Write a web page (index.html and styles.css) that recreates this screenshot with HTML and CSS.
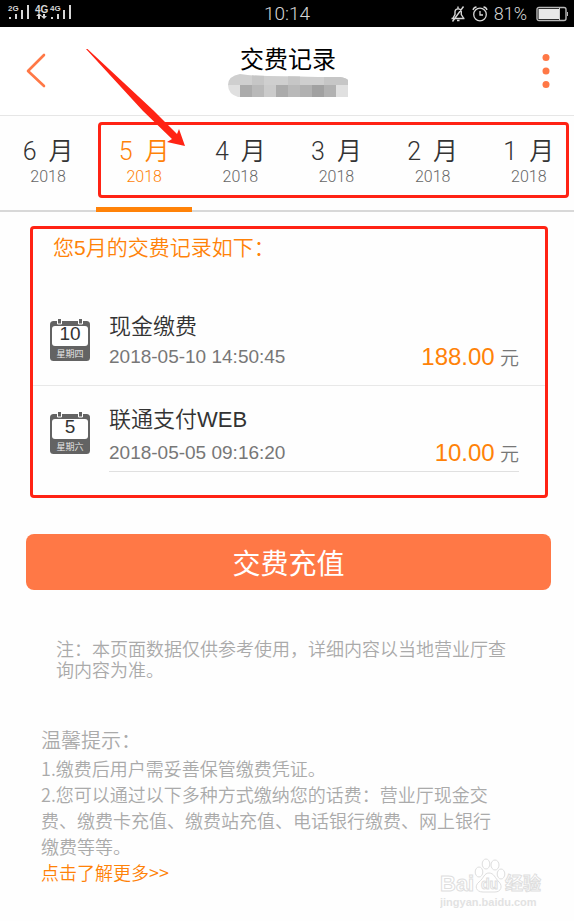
FILE: index.html
```html
<!DOCTYPE html>
<html lang="zh-CN">
<head>
<meta charset="utf-8">
<meta name="viewport" content="width=device-width, initial-scale=1">
<title>交费记录</title>
<link rel="stylesheet" href="styles.css">
</head>
<body>
<div class="status">
  <svg class="signals" width="72" height="27" viewBox="0 0 72 27" fill="#d6d6d6" aria-hidden="true">
    <text x="8" y="11" font-size="8">2G</text>
    <path d="M9 17h2v2H9zM15 14h2v5h-2zM21 10h2v9h-2zM27 5h2v14h-2z"/>
    <text x="35" y="13" font-size="10">4G</text>
    <path d="M38 19v-3h-2l3-3 3 3h-2v3zM43 14h2v2h2l-3 3-3-3h2z"/>
    <text x="50" y="11" font-size="8">4G</text>
    <path d="M51 17h2v2h-2zM57 14h2v5h-2zM63 10h2v9h-2zM69 5h2v14h-2z"/>
  </svg>
  <time class="clock">10:14</time>
  <div class="status-right">
    <svg width="16" height="18" viewBox="0 0 16 18" fill="none" stroke="#d6d6d6" stroke-width="1.4" aria-hidden="true">
      <path d="M1.500 13.500h13M3 13l2-3.500V6.500a3.200 3.200 0 0 1 6.300 0v3L13.500 13M8 3.500V1.500M7 15.500h2.500M13.500 1.500 2.500 16.500"/>
    </svg>
    <svg width="16" height="18" viewBox="0 0 16 18" fill="none" stroke="#d6d6d6" stroke-width="1.3" aria-hidden="true">
      <circle cx="8" cy="9.500" r="6.300"/><path d="M8 6v4h3M1 5a4 4 0 0 1 3.500-3M15 5a4 4 0 0 0-3.500-3"/>
    </svg>
    <span class="percent">81%</span>
    <svg width="33" height="16" viewBox="0 0 33 16" aria-hidden="true">
      <rect x="1" y="1.500" width="29" height="13" rx="2" fill="none" stroke="#b8b8b8" stroke-width="1.400"/>
      <rect x="2.500" y="3" width="21" height="10" fill="#e8e8e8"/><path d="M23.500 2v12" stroke="#ccc"/>
      <path d="M31 6h1v4h-1z" fill="#b8b8b8"/>
    </svg>
  </div>
</div>

<header class="header">
  <button class="icon-button" type="button" aria-label="返回">
    <svg width="20" height="36" viewBox="0 0 20 36" fill="none" stroke="#ff7846" stroke-width="2.600" stroke-linecap="round" stroke-linejoin="round"><path d="M18 2 2 18l16 15"/></svg>
  </button>
  <div class="heading">
    <h1>交费记录</h1>
    <svg class="number-mask" width="120" height="23" viewBox="0 0 120 23" aria-hidden="true">
      <defs><clipPath id="smear"><path d="M12 0Q24 2 40 2T72 2.500T112 3Q118 4 120 6V23H10Q0 20 0 11T12 0"/></clipPath></defs>
      <g clip-path="url(#smear)">
        <path fill="#cfcfcf" d="M0 0h120v11H0z"/>
        <path fill="#c6c6c6" d="M24 0h12v11H24zM60 0h12v11H60zM96 0h24v11H96z"/>
        <path fill="#e0e0e0" d="M0 11h12v12H0zM108 11h12v12h-12z"/>
        <path fill="#ababab" d="M12 11h12v12H12zM48 11h12v12H48z"/>
        <path fill="#b9b9b9" d="M24 11h12v12H24zM60 11h12v12H60z"/>
        <path fill="#cbcbcb" d="M36 11h12v12H36z"/>
        <path fill="#b1b1b1" d="M72 11h12v12H72zM96 11h12v12H96z"/>
        <path fill="#a1a1a1" d="M84 11h12v12H84z"/>
      </g>
    </svg>
  </div>
  <button class="icon-button more" type="button" aria-label="更多">
    <svg width="8" height="36" viewBox="0 0 8 36" fill="#ff7846"><circle cx="4" cy="4.500" r="3.500"/><circle cx="4" cy="18" r="3.500"/><circle cx="4" cy="31.500" r="3.500"/></svg>
  </button>
</header>

<nav class="months" aria-label="月份">
  <a class="month" href="#m6"><span class="name"><span>6</span><span>月</span></span><span class="year">2018</span></a>
  <a class="month active" href="#m5" aria-current="true"><span class="name"><span>5</span><span>月</span></span><span class="year">2018</span></a>
  <a class="month" href="#m4"><span class="name"><span>4</span><span>月</span></span><span class="year">2018</span></a>
  <a class="month" href="#m3"><span class="name"><span>3</span><span>月</span></span><span class="year">2018</span></a>
  <a class="month" href="#m2"><span class="name"><span>2</span><span>月</span></span><span class="year">2018</span></a>
  <a class="month" href="#m1"><span class="name"><span>1</span><span>月</span></span><span class="year">2018</span></a>
  <div class="marker"></div>
  <svg class="arrow" width="100" height="98" viewBox="0 0 100 98" fill="#ff2314" aria-hidden="true">
    <path d="M0 0 1.500 0 67 61 91 85 93 80 99 97 81 93 86 90 57 62Z"/>
  </svg>
</nav>

<main>
  <section class="records">
    <h2>您5月的交费记录如下：</h2>
    <article class="record">
      <svg class="calendar" width="40" height="44" viewBox="0 0 40 44" role="img">
        <rect y="3" width="40" height="40" rx="3.500" fill="#636363"/>
        <rect x="2" y="8" width="36" height="20" rx="3" fill="#fff"/>
        <path d="M7.500 1v5h4V1M28.500 1v5h4V1" fill="#636363" stroke="#fff"/>
        <text class="day" x="20" y="22">10</text><text class="weekday" x="20" y="39">星期四</text>
      </svg>
      <div class="body">
        <div class="info"><h3>现金缴费</h3><time>2018-05-10 14:50:45</time></div>
        <p class="amount"><strong>188.00</strong> 元</p>
      </div>
    </article>
    <article class="record last">
      <svg class="calendar" width="40" height="44" viewBox="0 0 40 44" role="img">
        <rect y="3" width="40" height="40" rx="3.500" fill="#636363"/>
        <rect x="2" y="8" width="36" height="20" rx="3" fill="#fff"/>
        <path d="M7.500 1v5h4V1M28.500 1v5h4V1" fill="#636363" stroke="#fff"/>
        <text class="day" x="20" y="22">5</text><text class="weekday" x="20" y="39">星期六</text>
      </svg>
      <div class="body">
        <div class="info"><h3>联通支付WEB</h3><time>2018-05-05 09:16:20</time></div>
        <p class="amount"><strong>10.00</strong> 元</p>
      </div>
    </article>
  </section>

  <button class="pay" type="button">交费充值</button>

  <p class="note">注：本页面数据仅供参考使用，详细内容以当地营业厅查询内容为准。</p>

  <section class="tips">
    <h2>温馨提示：</h2>
    <p>1.缴费后用户需妥善保管缴费凭证。</p>
    <p>2.您可以通过以下多种方式缴纳您的话费：营业厅现金交费、缴费卡充值、缴费站充值、电话银行缴费、网上银行缴费等等。</p>
    <a href="#more">点击了解更多&gt;&gt;</a>
  </section>

  <svg class="watermark" width="106" height="54" viewBox="0 0 106 54" fill="#fff" stroke="#dedede" aria-hidden="true">
    <text x="0" y="34" font-size="22">Bai</text>
    <ellipse cx="39" cy="15" rx="3.800" ry="5"/><ellipse cx="46" cy="7" rx="3.800" ry="5"/><ellipse cx="55" cy="8" rx="4" ry="5"/><ellipse cx="61" cy="17" rx="3.800" ry="5"/>
    <path d="M49 16c5 0 6 5 10 9s2 10-4 10H43c-7 0-9-6-4-10s5-9 10-9z"/>
    <text x="41" y="32" font-size="14">du</text>
    <text x="65" y="33" font-size="18">经验</text>
    <text class="site" x="0" y="49" font-size="11">jingyan.baidu.com</text>
  </svg>
</main>
</body>
</html>
```

FILE: styles.css
```css
* { box-sizing: border-box; }

body {
  margin: 0;
  background: #fefefe;
  color: #333;
  font-family: Roboto, "Noto Sans CJK SC", sans-serif;
  font-weight: 350;
}

h1, h2, h3, p { margin: 0; font-weight: 350; }
a { text-decoration: none; }
svg { display: block; }
button { border: 0; cursor: pointer; font-family: inherit; }

/* Status bar */
.status {
  display: grid;
  grid-template-columns: 1fr auto 1fr;
  align-items: center;
  height: 27px;
  background: #000;
  color: #d6d6d6;
}
.signals { font-family: "Liberation Sans", sans-serif; font-weight: 700; }
.clock { font-size: 19px; line-height: 26px; }
.status-right {
  display: flex;
  justify-content: flex-end;
  align-items: center;
  gap: 6px;
  padding-right: 5px;
}
.percent { margin-right: 3px; font-size: 18px; line-height: 26px; }

/* Title bar */
.header {
  display: flex;
  justify-content: space-between;
  align-items: flex-start;
  height: 89px;
  padding: 19px 24px 0 26px;
  border-bottom: 1px solid #e6e6e6;
  background: #fff;
}
.icon-button { width: 60px; margin-top: 7px; padding: 0; background: none; }
.more { display: flex; justify-content: flex-end; }
.heading { display: flex; flex-direction: column; align-items: center; }
.heading h1 { color: #000; font-size: 24px; font-weight: 400; line-height: 28px; }

/* Month tabs */
.months {
  position: relative;
  display: flex;
  height: 96px;
  border-bottom: 2px solid #d8d8d8;
}
.month {
  display: flex;
  flex: 0 0 16.75%;
  flex-direction: column;
  align-items: center;
  height: 96px;
  padding-top: 21px;
  border-bottom: 5px solid transparent;
  color: #333;
}
.name { display: flex; gap: 12px; font-size: 25px; line-height: 30px; }
.year { color: #666; font-size: 16px; line-height: 20px; }
.active { border-color: #ff8208; }
.active, .active .year { color: #ff8208; }
.marker {
  position: absolute;
  inset: 6px 5px 12px 98px;
  border: 3px solid #ff2314;
  border-radius: 4px;
}
.arrow { position: absolute; top: -67px; left: 86px; }

/* Payment records */
main { position: relative; padding-bottom: 36px; }
.records {
  margin: 14px 26px 0 30px;
  border: 3px solid #ff2314;
  border-radius: 4px;
  padding-bottom: 23px;
  font-family: "Liberation Sans", "Noto Sans CJK SC", sans-serif;
}
.records h2 {
  padding: 4px 20px 0;
  color: #ff8208;
  font-size: 21px;
  line-height: 30px;
}
.record {
  display: flex;
  gap: 19px;
  padding: 49px 26px 13px 17px;
  border-bottom: 1px solid #e8e8e8;
}
.calendar { flex: none; margin-top: 6px; }
.day { fill: #333; font-size: 19px; text-anchor: middle; }
.weekday { fill: #eee; font-size: 9px; text-anchor: middle; }
.body {
  display: flex;
  flex: 1;
  justify-content: space-between;
  align-items: flex-end;
}
.info { display: flex; flex-direction: column; }
.info h3 { font-size: 22px; line-height: 30px; }
.info time { color: #777; font-size: 19px; line-height: 30px; }
.amount { color: #777; font-size: 19px; line-height: 26px; }
.amount strong { color: #ff8208; font-size: 24px; font-weight: 350; }
.last { padding-top: 19px; padding-bottom: 0; border-bottom: 0; }
.last .info { gap: 3px; }
.last .body { padding-bottom: 3px; border-bottom: 1px solid #e0e0e0; }

/* Actions and notes */
.pay {
  display: block;
  width: calc(100% - 49px);
  height: 56px;
  margin: 36px 23px 0 26px;
  border-radius: 8px;
  background: #ff7846;
  color: #fff;
  font-size: 28px;
}
.note {
  margin: 49px 60px 0 56px;
  color: #aaa;
  font-size: 18px;
  line-height: 21px;
}
.tips {
  margin: 44px 73px 0 41px;
  color: #aaa;
  font-family: "Noto Sans CJK SC", sans-serif;
  font-size: 18px;
  line-height: 26px;
}
.tips h2 { font-size: 20px; line-height: 30px; }
.tips a { color: #ff8208; }

.watermark {
  position: absolute;
  right: 28px;
  bottom: 10px;
  font-family: "Liberation Sans", "Noto Sans CJK SC", sans-serif;
  font-weight: 700;
}
.site { fill: #e2e2e2; stroke: none; }
```
